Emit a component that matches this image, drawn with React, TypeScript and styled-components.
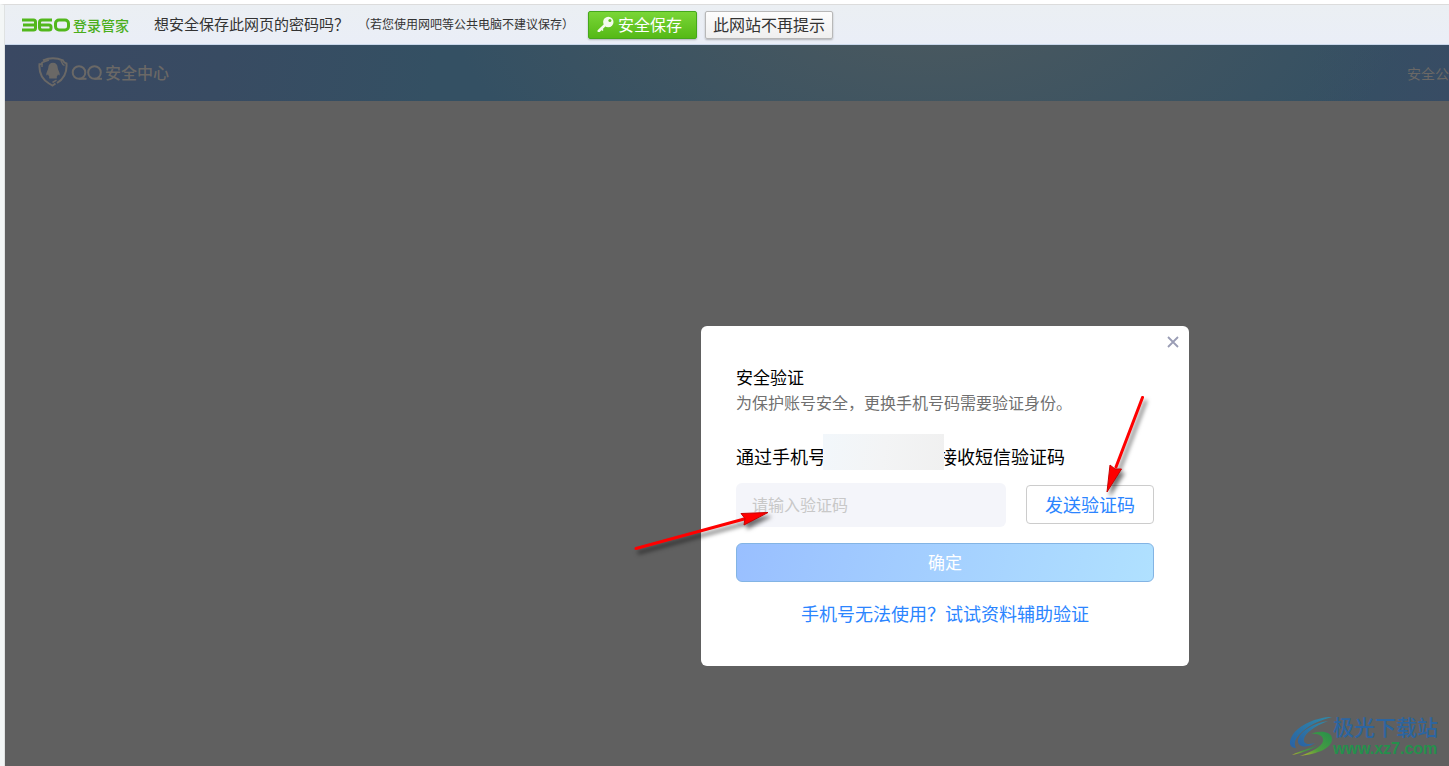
import React from "react";
import styled, { createGlobalStyle } from "styled-components";

const GlobalStyle = createGlobalStyle`
  * { box-sizing: border-box; }
  body {
    margin: 0;
    background: #ffffff;
    font-family: "Noto Sans CJK SC", "Liberation Sans", sans-serif;
    font-weight: 400;
  }
  button, input { font: inherit; }
`;

const Page = styled.div`
  display: flex;
  flex-direction: column;
  min-height: 100vh;
  padding-top: 4px;
  overflow: hidden;
`;

const Frame = styled.div`
  flex: 1;
  display: flex;
  flex-direction: column;
  border-top: 1px solid #dcdcdc;
  border-left: 4px solid #f3f6f6;
  box-shadow: inset 1px 0 #dfe2e2;
  padding-left: 1px;
`;

const SaveBar = styled.div`
  display: flex;
  align-items: center;
  height: 40px;
  padding-left: 17px;
  background: linear-gradient(#ebeff3, #eaeef7);
  border-bottom: 1px solid #c9d7ea;
  color: #333333;
  white-space: nowrap;
`;

const SaverBrand = styled.div`
  display: flex;
  align-items: center;
  gap: 3px;
  width: 132px;
  color: #4aae1c;
  font-size: 14px;
  font-weight: 500;
  line-height: 20px;
`;

const Question = styled.p`
  margin: 0;
  width: 204px;
  padding-bottom: 2px;
  font-size: 15px;
  line-height: 20px;
`;

const Hint = styled.p`
  margin: 0;
  width: 230px;
  padding-bottom: 2px;
  font-size: 12px;
  line-height: 20px;
`;

const BarButton = styled.button<{ $primary?: boolean }>`
  display: flex;
  align-items: center;
  justify-content: center;
  gap: 4px;
  height: 28px;
  margin-right: 8px;
  padding: 0 7px 2px;
  border: 1px solid ${(p) => (p.$primary ? "#45a81c" : "#b8b8b8")};
  border-radius: 2px;
  background: ${(p) =>
    p.$primary ? "linear-gradient(#7ad637, #55b916)" : "linear-gradient(#fdfdfd, #efefef)"};
  box-shadow: 0 1px 2px rgba(0, 0, 0, 0.25);
  color: ${(p) => (p.$primary ? "#ffffff" : "#333333")};
  font-size: 16px;
  line-height: 24px;
  ${(p) => (p.$primary ? "width: 109px; padding-right: 13px;" : "width: 128px;")}
`;

const SiteHeader = styled.header`
  display: flex;
  align-items: center;
  justify-content: space-between;
  height: 56px;
  padding-left: 33px;
  background:
    radial-gradient(ellipse 480px 230px at 64% -40px, rgba(78, 90, 94, 0.9), rgba(54, 80, 98, 0)),
    linear-gradient(100deg, #3a4862 0%, #384b62 15%, #345063 30%, #345063 90%, #384c64 100%);
  color: #6a6866;
`;

const SiteBrand = styled.div`
  display: flex;
  align-items: center;
  gap: 3px;
  padding-bottom: 2px;
  font-size: 16px;
  font-weight: 500;
  line-height: 24px;
`;

const HeaderLink = styled.a`
  color: #6a6866;
  font-size: 14px;
  line-height: 20px;
  text-decoration: none;
`;

const Stage = styled.main`
  flex: 1;
  display: flex;
  align-items: flex-start;
  justify-content: flex-end;
  padding: 225px 260px 100px 0;
  background: #606060;
`;

const Dialog = styled.section`
  position: relative;
  width: 488px;
  padding: 39px 35px 40px;
  border-radius: 6px;
  background: #ffffff;
`;

const CloseButton = styled.button`
  position: absolute;
  top: 8px;
  right: 8px;
  display: flex;
  padding: 2px;
  border: 0;
  background: none;
`;

const Title = styled.h1`
  margin: 0;
  color: #000000;
  font-size: 17px;
  font-weight: 400;
  line-height: 24px;
`;

const Description = styled.p`
  margin: 0;
  color: #707070;
  font-size: 16px;
  line-height: 26px;
`;

const PhoneLine = styled.label`
  display: flex;
  align-items: flex-end;
  margin-top: 19px;
  color: #000000;
  font-size: 18px;
  line-height: 28px;
  white-space: nowrap;
`;

const PhoneMask = styled.span`
  position: relative;
  width: 121px;
  height: 36px;
  margin: 0 -5px 0 -3px;
  background: linear-gradient(100deg, #f2f7fb, #f3f4f5 50%, #f0f0f0);
`;

const CodeRow = styled.div`
  display: flex;
  align-items: flex-start;
  gap: 20px;
  margin-top: 13px;
`;

const CodeInput = styled.input`
  flex: 1;
  min-width: 0;
  height: 44px;
  padding: 0 16px 2px;
  border: 0;
  border-radius: 6px;
  background: #f4f5fa;
  font-size: 16px;
  &::placeholder { color: #c8c8c8; opacity: 1; }
`;

const SendButton = styled.button`
  width: 128px;
  height: 39px;
  margin-top: 2px;
  padding: 0 0 2px;
  border: 1px solid #cccccc;
  border-radius: 4px;
  background: #ffffff;
  color: #2b85ff;
  font-size: 18px;
  line-height: 24px;
`;

const ConfirmButton = styled.button`
  display: block;
  width: 100%;
  height: 39px;
  margin-top: 16px;
  padding: 0 0 2px;
  border: 1px solid #83b4e4;
  border-radius: 6px;
  background: linear-gradient(105deg, #99bfff, #b0e1ff);
  color: #ffffff;
  font-size: 17px;
  line-height: 24px;
`;

const HelpLink = styled.a`
  display: block;
  margin-top: 18px;
  color: #2b85ff;
  font-size: 18px;
  line-height: 26px;
  text-align: center;
  text-decoration: none;
`;

const Pointer = styled.svg<{ $top: number; $left: number }>`
  position: absolute;
  top: ${(p) => p.$top}px;
  left: ${(p) => p.$left}px;
  pointer-events: none;
  overflow: visible;
  filter: drop-shadow(3px 4px 2px rgba(0, 0, 0, 0.55));
`;

const Watermark = styled.div`
  position: absolute;
  right: 11px;
  bottom: 8px;
  display: flex;
  align-items: center;
`;

const WatermarkText = styled.div`
  display: flex;
  flex-direction: column;
  color: #2c65a0;
  font-family: "Liberation Sans", "Noto Sans CJK SC", sans-serif;
  font-size: 21px;
  font-weight: 500;
  line-height: 24px;
`;

const WatermarkUrl = styled.span`
  color: #25904c;
  font-size: 16px;
  font-weight: 700;
  line-height: 18px;
`;

const Viewport = styled.div`
  position: relative;
`;

function Logo360() {
  return (
    <svg width="48" height="14" viewBox="0 0 48 14" fill="none" stroke="#52b71c" strokeWidth="3" role="img" aria-label="360">
      <path d="M0 2h11.500q2 0 2 2v6q0 2-2 2H0M1 7h12" />
      <path d="M30 2H20q-2.500 0-2.500 2.500v5q0 2.500 2.500 2.500h7q2 0 2-2v-1q0-2-2-2h-9" />
      <rect x="33.500" y="2" width="13" height="10" rx="3.500" />
    </svg>
  );
}

function KeyIcon() {
  return (
    <svg width="17" height="17" viewBox="0 0 17 17" aria-hidden="true">
      <path d="M8 10 1.800 16" stroke="#f4fbee" strokeWidth="2.600" strokeLinecap="round" />
      <path d="m4.500 14 1.500 1.500" stroke="#f4fbee" strokeWidth="1.600" />
      <circle cx="11.300" cy="7" r="5.200" fill="#f4fbee" />
      <circle cx="12.900" cy="5.500" r="1.500" fill="#62c323" />
    </svg>
  );
}

function ShieldLogo() {
  return (
    <svg width="30" height="30" viewBox="0 0 30 30" fill="none" stroke="#6a6866" strokeWidth="2" aria-hidden="true">
      <path d="M5 3.500Q15-1 25 3.500q.8 2.200 3.500 3Q29.500 20 19 26" />
      <path d="M4.500 6.500q-1 .7-3 .8Q.5 20 11 26.500l3.500 2 3-2" />
      <path d="M4 10V5.500l7-2.500M23 4l2 3.500 1.500 1M14.500 25.500l4-2.300" strokeWidth="1.500" />
      <path
        d="M15 5.800c3 0 4.600 2 4.700 5 0 2.100 2.500 4.700 2 7.400-.7.500-1.300-.3-1.700-.9-.2 1.100-.8 2-1.500 2.700 1 .9.500 1.500-.7 1.500H12.200c-1.200 0-1.700-.6-.7-1.500-.7-.7-1.300-1.600-1.500-2.700-.4.600-1 1.400-1.700.9-.5-2.700 2-5.300 2-7.400.1-3 1.700-5 4.700-5Z"
        fill="#6a6866"
        stroke="none"
      />
    </svg>
  );
}

function QQMark() {
  return (
    <svg width="31" height="15" viewBox="0 0 31 15" fill="none" stroke="#6a6866" strokeWidth="2" role="img" aria-label="QQ">
      <circle cx="8" cy="7.500" r="6.300" />
      <path d="M8 13.800h7.500" />
      <circle cx="23.500" cy="7.500" r="6.300" />
      <path d="M23.500 13.800H31" />
    </svg>
  );
}

function SwirlLogo() {
  return (
    <svg width="43" height="42" viewBox="0 0 43 42" aria-hidden="true">
      <defs>
        <linearGradient id="swirlBlue" x1="1" y1="0" x2="0" y2="1">
          <stop offset="0" stopColor="#2f8aa8" />
          <stop offset="1" stopColor="#2a62a4" />
        </linearGradient>
        <linearGradient id="swirlGreen" x1="1" y1="0" x2="0" y2="1">
          <stop offset="0" stopColor="#25904c" />
          <stop offset=".6" stopColor="#4b9c40" />
          <stop offset="1" stopColor="#b4b32e" />
        </linearGradient>
      </defs>
      <path d="M42 1C27 1 8 9 2 20c-5 9 0 12 4 12C3 27 6 21 13 15 21 8 31 4 42 1Z" fill="url(#swirlBlue)" />
      <path d="M38 5C24 7 10 15 8 24c-1 7 8 9 17 3-7 2-12 1-11-4 1-6 11-13 24-18Z" fill="url(#swirlBlue)" />
      <path d="M21 18c8-4 21-3 21 5 0 9-14 15-32 17 11-4 22-9 23-15 1-5-5-8-12-7Z" fill="url(#swirlGreen)" />
      <path d="M28 29C22 33 12 37 2 39c9-5 18-6 26-10Z" fill="url(#swirlGreen)" />
    </svg>
  );
}

export default function App() {
  return (
    <Viewport>
      <GlobalStyle />
      <Page>
        <Frame>
          <SaveBar>
            <SaverBrand>
              <Logo360 />
              <span>登录管家</span>
            </SaverBrand>
            <Question>想安全保存此网页的密码吗？</Question>
            <Hint>（若您使用网吧等公共电脑不建议保存）</Hint>
            <BarButton type="button" $primary>
              <KeyIcon />
              安全保存
            </BarButton>
            <BarButton type="button">此网站不再提示</BarButton>
          </SaveBar>
          <SiteHeader>
            <SiteBrand>
              <ShieldLogo />
              <QQMark />
              <span>安全中心</span>
            </SiteBrand>
            <HeaderLink href="#notice">安全公</HeaderLink>
          </SiteHeader>
          <Stage>
            <Dialog role="dialog" aria-labelledby="dialog-title">
              <CloseButton type="button" aria-label="关闭">
                <svg width="12" height="12" viewBox="0 0 12 12" stroke="#9a9db5" strokeWidth="1.800">
                  <path d="m1 1 10 10M11 1 1 11" />
                </svg>
              </CloseButton>
              <Title id="dialog-title">安全验证</Title>
              <Description>为保护账号安全，更换手机号码需要验证身份。</Description>
              <PhoneLine htmlFor="code">
                通过手机号
                <PhoneMask />
                接收短信验证码
              </PhoneLine>
              <CodeRow>
                <CodeInput id="code" type="text" placeholder="请输入验证码" />
                <SendButton type="button">发送验证码</SendButton>
              </CodeRow>
              <ConfirmButton type="button">确定</ConfirmButton>
              <HelpLink href="#assist">手机号无法使用？试试资料辅助验证</HelpLink>
              <Pointer $top={69} $left={404} width="40" height="98" viewBox="0 0 40 98" aria-hidden="true">
                <path d="M37.500 2.500 11 72" stroke="#ff0000" strokeWidth="3" strokeLinecap="round" />
                <path d="M2 97 5 70l5 4 6.500 0Z" fill="#ff0000" stroke="#c80000" />
              </Pointer>
              <Pointer $top={185} $left={-67} width="136" height="40" viewBox="0 0 136 40" aria-hidden="true">
                <path d="M2 37.500 112 7.500" stroke="#ff0000" strokeWidth="3" strokeLinecap="round" />
                <path d="M134 1.500 107 2.500l4 5-1 6.500Z" fill="#ff0000" stroke="#c80000" />
              </Pointer>
            </Dialog>
          </Stage>
        </Frame>
      </Page>
      <Watermark>
        <SwirlLogo />
        <WatermarkText>
          <span>极光下载站</span>
          <WatermarkUrl>www.xz7.com</WatermarkUrl>
        </WatermarkText>
      </Watermark>
    </Viewport>
  );
}
